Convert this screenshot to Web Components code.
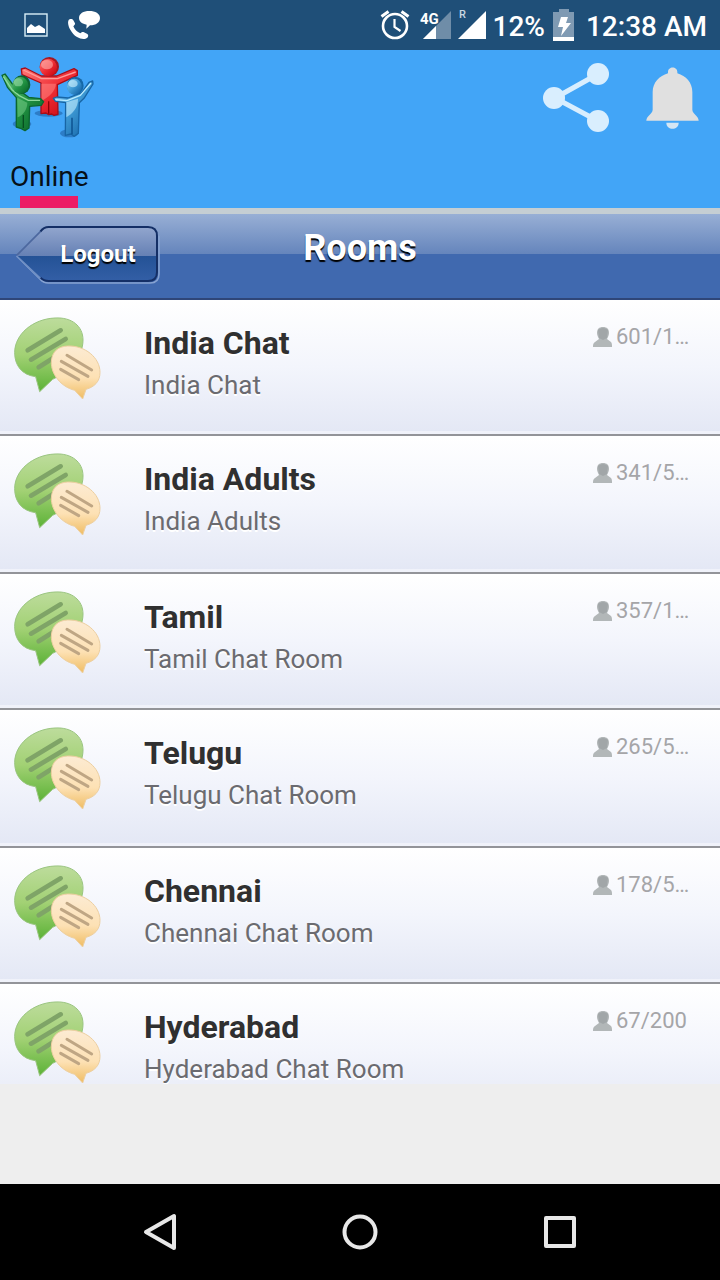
<!DOCTYPE html>
<html lang="en">
<head>
  <meta charset="UTF-8">
  <meta name="viewport" content="width=device-width, initial-scale=1.0">
  <title>Rooms</title>
  <style>
    body {
      margin: 0;
      height: 100vh;
      display: flex;
      flex-direction: column;
      background: #eee;
      font-family: Roboto, "Liberation Sans", sans-serif;
    }
    ad-space {
      display: block;
      height: 100px;
      flex: none;
    }
  </style>
</head>
<body>
  <status-bar battery="12%" time="12:38 AM"></status-bar>
  <app-toolbar>Online</app-toolbar>
  <page-header back="Logout">Rooms</page-header>
  <room-list>
    <room-item count="601/1…">India Chat<span slot="desc">India Chat</span></room-item>
    <room-item count="341/5…">India Adults<span slot="desc">India Adults</span></room-item>
    <room-item count="357/1…">Tamil<span slot="desc">Tamil Chat Room</span></room-item>
    <room-item count="265/5…">Telugu<span slot="desc">Telugu Chat Room</span></room-item>
    <room-item count="178/5…">Chennai<span slot="desc">Chennai Chat Room</span></room-item>
    <room-item count="67/200">Hyderabad<span slot="desc">Hyderabad Chat Room</span></room-item>
  </room-list>
  <ad-space></ad-space>
  <nav-bar></nav-bar>

  <template id="status-bar">
    <style>
      :host {
        display: flex;
        flex: none;
        align-items: center;
        justify-content: space-between;
        height: 50px;
        padding: 0 13px 0 24px;
        background: #1f4f78;
        color: #fff;
        font-size: 28px;
        font-weight: 500;
        line-height: 32px;
      }
      div {
        display: flex;
        align-items: center;
      }
      svg {
        display: block;
      }
      span {
        padding-top: 3px;
      }
      .left {
        gap: 20px;
      }
      .right {
        gap: 5px;
      }
      .battery {
        margin: 0 6px 0 3px;
      }
      .alarm {
        margin-right: 5px;
      }
    </style>
    <div class="left">
      <svg width="24" height="24" viewBox="0 0 24 24">
        <rect x="1" y="1" width="22" height="22" fill="none" stroke="#d9f0f8" stroke-width="1.4"/>
        <path d="M3 20v-5l4-4 4 3 4-2 6 4v4z" fill="#fff"/>
      </svg>
      <svg width="32" height="30" viewBox="0 0 96 90" fill="#fff">
        <path d="M64 3c18 0 32 8 32 21S84 46 66 46l-11 10 1-12C43 42 33 35 33 24 33 11 46 3 64 3z"/>
        <path d="M5 28c5-2 9 0 11 3l5 9c1 4-3 6-5 9 4 10 11 17 21 21 4-3 7-5 11-3l10 5c4 3 3 8 0 11-7 6-19 5-31-2C8 69-3 43 1 33c1-3 2-4 4-5z"/>
      </svg>
    </div>
    <div class="right">
      <svg class="alarm" width="30" height="30" viewBox="0 0 30 30" fill="none" stroke="#fff">
        <circle cx="15" cy="16" r="12" stroke-width="2.6"/>
        <path d="M14.500 9v8l6 4" stroke-width="2.2"/>
        <path d="M1.500 6.500l7-5M21.500 1.500l7 5" stroke-width="3"/>
      </svg>
      <svg width="32" height="32" viewBox="0 0 32 32">
        <path d="M31 2v28H3z" fill="#6f8da8"/>
        <path d="M16 17v13H3z" fill="#fff"/>
        <rect x="0" y="2" width="17" height="14" fill="#1f4f78"/>
        <text x="0" y="15" font-size="15" font-weight="700" fill="#fff">4G</text>
      </svg>
      <svg width="30" height="32" viewBox="0 0 30 32" fill="#fff">
        <path d="M29 2v28H1z"/>
        <text x="2" y="9" font-size="11" font-weight="500" fill="#c9d8e4">R</text>
      </svg>
      <span class="percent"></span>
      <svg class="battery" width="22" height="32" viewBox="0 0 22 32">
        <path d="M6 0h10v3h5v29H0V3h6z" fill="#7f9ab3"/>
        <path d="M0 28h21v4H0z" fill="#fff"/>
        <path d="M8 8h7l-2 6h5L8 27l2-9H5z" fill="#fff"/>
      </svg>
      <span class="time"></span>
    </div>
  </template>

  <template id="app-toolbar">
    <style>
      :host {
        display: block;
        flex: none;
        background: #42a5f7;
      }
      .bar, .actions {
        display: flex;
        justify-content: space-between;
      }
      .bar {
        height: 104px;
      }
      .actions {
        padding: 12px 20px 0 0;
        gap: 34px;
      }
      svg {
        display: block;
      }
      button {
        border: 0;
        padding: 0;
        background: none;
        font: inherit;
        align-self: flex-start;
      }
      .tab {
        display: flex;
        flex-direction: column;
        align-items: center;
        padding: 0 10px;
        font-size: 28px;
        line-height: 46px;
        color: #061018;
      }
      .tab::after {
        content: "";
        width: 58px;
        height: 12px;
        margin-top: -4px;
        background: #ec1c64;
      }
    </style>
    <div class="bar">
      <svg width="96" height="90" viewBox="0 0 288 270">
        <defs>
          <linearGradient id="red" x1="0" y1="0" x2="1" y2="1">
            <stop offset="0" stop-color="#ff7a78"/><stop offset=".5" stop-color="#ef2f36"/><stop offset="1" stop-color="#c4000c"/>
          </linearGradient>
          <linearGradient id="green" x1="0" y1="0" x2="1" y2="1">
            <stop offset="0" stop-color="#69c47c"/><stop offset=".5" stop-color="#239544"/><stop offset="1" stop-color="#056125"/>
          </linearGradient>
          <linearGradient id="blue" x1="0" y1="0" x2="1" y2="1">
            <stop offset="0" stop-color="#8fd2f5"/><stop offset=".5" stop-color="#3d98d3"/><stop offset="1" stop-color="#0c5a9f"/>
          </linearGradient>
        </defs>
        <g fill="#1d5da0" opacity=".55">
          <ellipse cx="146" cy="190" rx="42" ry="10"/>
          <ellipse cx="66" cy="222" rx="28" ry="12"/>
          <ellipse cx="208" cy="250" rx="28" ry="12"/>
        </g>
        <g stroke-linejoin="round">
          <path d="M64 57l12-3 48 24h46l52-22 10 6v14l-60 28 2 89-12 3-7-4-9 2-8-5-15 2V99L66 74z" fill="url(#red)" stroke="#a80d18" stroke-width="4"/>
          <path d="M70 60l55 26h47l55-20" fill="none" stroke="#ff9b98" stroke-width="4"/>
          <path d="M124 101h44c-2 24-22 40-44 52z" fill="#ff8582" opacity=".55"/>
          <path d="M146 154v37" stroke="#8e0009" stroke-width="4"/>
          <ellipse cx="148" cy="50" rx="29" ry="29" fill="#a51822"/>
          <ellipse cx="145" cy="52" rx="26" ry="26" fill="url(#red)"/>
          <ellipse cx="141" cy="44" rx="18" ry="14" fill="#ffb0ac" opacity=".6"/>
        </g>
        <g stroke-linejoin="round">
          <path d="M6 76l9-4 28 38 43 32 36 4 9 9-7 11-35 3-2 65-12 8-11-6-15-5V143L23 113z" fill="url(#green)" stroke="#0c6630" stroke-width="4"/>
          <path d="M10 80l26 39 20 17 29 15h35" fill="none" stroke="#8bd89a" stroke-width="4"/>
          <path d="M52 143l30 15c0 22-14 37-29 44z" fill="#7dd18e" opacity=".5"/>
          <path d="M70 195v39" stroke="#064e20" stroke-width="4"/>
          <ellipse cx="65" cy="104" rx="26" ry="28" fill="#0d6331"/>
          <ellipse cx="61" cy="106" rx="24" ry="25" fill="url(#green)"/>
          <ellipse cx="55" cy="97" rx="14" ry="12" fill="#a0dfad" opacity=".55"/>
        </g>
        <g stroke-linejoin="round">
          <path d="M160 145l10-4 34 3 41-16 22-31 11-4 1 9-27 43-14 13-3 92-12 9-10-7-17 4 1-98-30-4z" fill="url(#blue)" stroke="#1765a5" stroke-width="4"/>
          <path d="M166 149l35 3 40-16 32-37" fill="none" stroke="#b8ebff" stroke-width="4"/>
          <path d="M199 157l35-11c1 28-17 44-35 56z" fill="#c4efff" opacity=".6"/>
          <path d="M216 203v50" stroke="#084b8a" stroke-width="4"/>
          <ellipse cx="226" cy="107" rx="25" ry="27" fill="#1568a7"/>
          <ellipse cx="223" cy="110" rx="22" ry="24" fill="url(#blue)"/>
          <ellipse cx="219" cy="101" rx="14" ry="11" fill="#d2f3ff" opacity=".6"/>
        </g>
      </svg>
      <div class="actions">
        <button aria-label="Share">
          <svg width="68" height="72" viewBox="0 0 68 72" fill="#d9eefe">
            <path d="M56 12L13 36l43 23" fill="none" stroke="#d9eefe" stroke-width="5"/>
            <circle cx="56" cy="12" r="11"/><circle cx="12" cy="36" r="11"/><circle cx="56" cy="59" r="11"/>
          </svg>
        </button>
        <button aria-label="Notifications">
          <svg width="56" height="72" viewBox="0 0 168 216" fill="#e0e0e0">
            <path d="M72 30c0-18 28-18 28 0v4c26 8 45 28 45 56v53c0 12 19 18 19 33H7c0-15 19-21 19-33V90c0-28 20-48 46-56z"/>
            <path d="M67 182h37c0 24-37 24-37 0z" fill="#d4e6f4"/>
          </svg>
        </button>
      </div>
    </div>
    <button class="tab"><slot></slot></button>
  </template>

  <template id="page-header">
    <style>
      :host {
        display: grid;
        grid-template-columns: 1fr auto 1fr;
        align-items: start;
        flex: none;
        box-sizing: border-box;
        height: 92px;
        padding: 11px 15px 0;
        border-top: 6px solid #c5ced3;
        border-bottom: 2px solid #2f4678;
        background: linear-gradient(#98afd5, #6585bc 40px, #4069af 40px);
        color: #fff;
      }
      button {
        display: grid;
        justify-self: start;
        align-items: center;
        border: 0;
        padding: 0;
        background: none;
        color: inherit;
        font: bold 24px/32px Roboto, "Liberation Sans", sans-serif;
        text-shadow: 0 2px 1px #000;
      }
      button > * {
        grid-area: 1 / 1;
      }
      span {
        padding: 0 24px 2px 45px;
      }
      svg {
        display: block;
      }
      h1 {
        margin: 0;
        font-size: 36px;
        line-height: 46px;
        text-shadow: 0 2px 1px #000;
      }
    </style>
    <button>
      <svg width="145" height="60" viewBox="0 0 435 180">
        <defs>
          <linearGradient id="face" x1="0" y1="0" x2="0" y2="1">
            <stop offset="0" stop-color="#92a6ce"/><stop offset=".54" stop-color="#6580b4"/>
            <stop offset=".54" stop-color="#245296"/><stop offset="1" stop-color="#335fa6"/>
          </linearGradient>
        </defs>
        <path d="M5 93l70 69q10 12 25 12h305q27 0 27-27V32" fill="none" stroke="#86a2d1" stroke-width="5"/>
        <path d="M5 91L76 20q10-14 25-14h298q27 0 27 27v108q0 27-27 27H101q-15 0-25-10z" fill="url(#face)"/>
        <path d="M76 20q10-14 25-14h298q27 0 27 27v108q0 27-27 27H101q-15 0-25-10" fill="none" stroke="#142f66" stroke-width="6"/>
        <path d="M76 20L5 91" stroke="#4c689f" stroke-width="5"/>
        <path d="M5 93l71 67" stroke="#6f8fc4" stroke-width="5"/>
      </svg>
      <span></span>
    </button>
    <h1><slot></slot></h1>
  </template>

  <template id="room-list">
    <style>
      :host {
        display: block;
        flex: 1;
        min-height: 0;
        overflow: hidden;
      }
    </style>
    <slot></slot>
  </template>

  <template id="room-item">
    <style>
      :host {
        display: block;
      }
      a {
        display: flex;
        align-items: flex-start;
        box-sizing: border-box;
        min-height: 136px;
        padding: 17px 34px 8px 14px;
        border-bottom: 2px solid #939499;
        background: linear-gradient(#fff, #f3f5fc 50%, #e4e8f5 98%, #f0f2fa 98%);
        color: inherit;
        text-decoration: none;
      }
      :host(:nth-child(even)) a {
        min-height: 138px;
      }
      svg {
        display: block;
        flex: none;
      }
      .text {
        flex: 1;
        min-width: 0;
        padding: 4px 0 0 42px;
        text-shadow: 0 2px 0 #fff;
      }
      h2, p {
        margin: 0;
      }
      h2 {
        font-size: 32px;
        line-height: 44px;
        color: #303030;
      }
      p {
        padding-top: 5px;
        font-size: 26px;
        line-height: 30px;
        color: #6b6b70;
      }
      .count {
        display: flex;
        align-items: center;
        gap: 3px;
        width: 93px;
        padding-top: 4px;
        font-size: 22px;
        line-height: 32px;
        color: #a5a5a8;
      }
    </style>
    <a href="#">
      <svg width="88" height="84" viewBox="42 51 264 252">
        <defs>
          <linearGradient id="big" x1="0" y1="0" x2="0" y2="1">
            <stop offset="0" stop-color="#bddc9c"/><stop offset=".5" stop-color="#a2d174"/><stop offset="1" stop-color="#5cb237"/>
          </linearGradient>
          <linearGradient id="small" x1="0" y1="0" x2="0" y2="1">
            <stop offset="0" stop-color="#fcebd3"/><stop offset=".6" stop-color="#fde1b4"/><stop offset="1" stop-color="#efbc62"/>
          </linearGradient>
        </defs>
        <path d="M165 54c50-3 84 24 84 66 0 50-39 93-91 118l-39 37-12-45c-41-5-63-33-63-72C44 103 98 57 165 54z" fill="url(#big)" stroke="#9ac580" stroke-width="3"/>
        <g stroke="#7fa467" stroke-width="14" stroke-linecap="round">
          <path d="M83 151l99-60M93 179l104-62M116 202l44-28"/>
        </g>
        <path d="M203 138c52-2 97 35 97 79 0 28-17 44-42 51l-10 29-24-26c-42-11-71-49-70-85 1-30 20-47 49-48z" fill="url(#small)" stroke="#edcfa0" stroke-width="3"/>
        <g stroke="#bfa684" stroke-width="9" stroke-linecap="round">
          <path d="M201 166l74 44M184 184l80 45M182 208l54 31"/>
        </g>
      </svg>
      <div class="text">
        <h2><slot></slot></h2>
        <p><slot name="desc"></slot></p>
      </div>
      <div class="count">
        <svg width="20" height="20" viewBox="0 0 20 20">
          <path d="M10 0c4 0 6 2 6 6 0 2-1 4-2 6l4 3c1 1 1 3 1 5H0c0-2 0-4 2-5l4-3C5 10 4 8 4 6c0-4 2-6 6-6z" fill="#b2b7b8"/>
          <path d="M5 3q5-4 10 0l-1 8-4 2-4-2z" fill="#a1a6a8"/>
        </svg>
        <span></span>
      </div>
    </a>
  </template>

  <template id="nav-bar">
    <style>
      :host {
        display: flex;
        flex: none;
        height: 96px;
        padding: 0 60px;
        background: #000;
      }
      button {
        flex: 1;
        display: flex;
        align-items: center;
        justify-content: center;
        border: 0;
        padding: 0;
        background: none;
      }
      svg {
        fill: none;
        stroke: #e8e8e8;
        stroke-width: 4;
        stroke-linejoin: round;
      }
    </style>
    <button aria-label="Back"><svg width="40" height="40" viewBox="0 0 40 40"><path d="M34 4v32L6 20z"/></svg></button>
    <button aria-label="Home"><svg width="40" height="40" viewBox="0 0 40 40"><circle cx="20" cy="20" r="15.500"/></svg></button>
    <button aria-label="Recent apps"><svg width="40" height="40" viewBox="0 0 40 40"><path d="M6 6h28v28H6z"/></svg></button>
  </template>

  <script>
    (function() {
      class TemplateElement extends HTMLElement {
        constructor() {
          super();
          const $template = document.getElementById(this.localName);
          this.attachShadow({mode: 'open'});
          this.shadowRoot.appendChild($template.content.cloneNode(true));
        }
        fill(selector, attribute) {
          this.shadowRoot.querySelector(selector).textContent = this.getAttribute(attribute);
        }
      }

      class StatusBar extends TemplateElement {
        connectedCallback() {
          this.fill('.percent', 'battery');
          this.fill('.time', 'time');
        }
      }

      class PageHeader extends TemplateElement {
        connectedCallback() {
          this.fill('button span', 'back');
        }
      }

      class RoomItem extends TemplateElement {
        connectedCallback() {
          this.fill('.count span', 'count');
        }
      }

      customElements.define('status-bar', StatusBar);
      customElements.define('app-toolbar', class extends TemplateElement {});
      customElements.define('page-header', PageHeader);
      customElements.define('room-list', class extends TemplateElement {});
      customElements.define('room-item', RoomItem);
      customElements.define('nav-bar', class extends TemplateElement {});
    })()
  </script>
</body>
</html>
